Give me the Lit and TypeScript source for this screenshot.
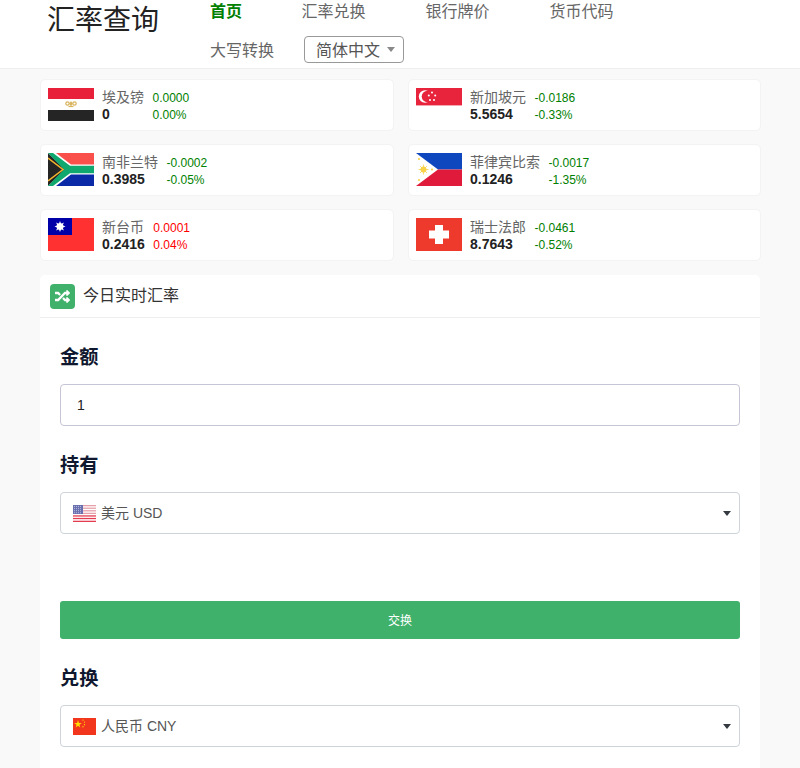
import { LitElement, html, css, svg } from "lit";
import { customElement } from "lit/decorators.js";

const flags: Record<string, unknown> = {
  eg: svg`<rect width="46" height="11" fill="#e8203a"/><rect y="11" width="46" height="11" fill="#fff"/><rect y="22" width="46" height="11" fill="#252525"/><g fill="none" stroke="#d8b35c" stroke-width="1.200"><circle cx="19.500" cy="15.500" r="1.700"/><circle cx="26.500" cy="15.500" r="1.700"/><path d="M23 13.500v5"/><path d="M20.500 18.500h5"/></g><circle cx="23" cy="15.500" r="1.600" fill="#d8b35c"/>`,
  sg: svg`<rect width="46" height="33" fill="#fff"/><rect width="46" height="17" fill="#e8233c"/><rect y="17" width="46" height="1" fill="#f4a7b1"/><circle cx="9" cy="8.500" r="6.200" fill="#fff"/><circle cx="11.500" cy="8.500" r="5.800" fill="#e8233c"/><g fill="#fff"><circle cx="16" cy="4.500" r="1"/><circle cx="12.800" cy="7.500" r="1"/><circle cx="19.200" cy="7.500" r="1"/><circle cx="14" cy="12" r="1"/><circle cx="18" cy="12" r="1"/></g>`,
  za: svg`<rect width="46" height="16.500" fill="#f9504c"/><rect y="16.500" width="46" height="16.500" fill="#0a2aa8"/><path d="M0 0l23 16.500L0 33z" fill="#252525"/><path d="M0 0h8l15 11.500h23v10H23L8 33H0l17-16.500z" fill="#fff"/><path d="M0 0h5l17 12.800h24v7.400H22L5 33H0l16-16.500z" fill="#0fa96f" stroke="none"/><path d="M0 5l15 11.500L0 28" fill="#252525" stroke="#f6b52e" stroke-width="1.500"/>`,
  tw: svg`<rect width="46" height="33" fill="#ff3131"/><rect width="24" height="17" fill="#0000a8"/><g fill="#fff"><circle cx="12" cy="8.500" r="3.300"/><path d="M12 3l1.200 3h-2.400zM12 14l-1.200-3h2.400zM6.500 8.500l3-1.200v2.400zM17.500 8.500l-3 1.200V7.300zM8.100 4.600l3 1.300-1.700 1.700zM15.900 12.400l-3-1.300 1.700-1.700zM15.900 4.600l-1.300 3-1.700-1.700zM8.100 12.400l1.300-3 1.700 1.700z"/></g>`,
  ph: svg`<rect width="46" height="16.500" fill="#0f47bf"/><rect y="16.500" width="46" height="16.500" fill="#e01a3a"/><path d="M0 0l22 16.500L0 33z" fill="#fff"/><g fill="#f8d34a"><circle cx="7.500" cy="16.500" r="3"/><path d="M7.500 11.500v10M2.500 16.500h10M4 13l7 7M11 13l-7 7" stroke="#f8d34a" stroke-width=".8"/><circle cx="3" cy="6" r="1.100"/><circle cx="3" cy="27" r="1.100"/><circle cx="16" cy="16.500" r="1.100"/></g>`,
  ch: svg`<rect width="46" height="33" fill="#ee3a2c"/><path d="M19 7h8v5.500h6v8h-6V26h-8v-5.500h-6v-8h6z" fill="#fff"/>`,
  us: svg`<rect width="46" height="33" fill="#fff"/><g fill="#e5a0aa"><rect width="46" height="2.500"/><rect y="5" width="46" height="2.500"/><rect y="10" width="46" height="2.500"/><rect y="15" width="46" height="2.500"/></g><g fill="#e33b50"><rect y="20" width="46" height="2.500"/><rect y="25" width="46" height="2.500"/><rect y="30.500" width="46" height="2.500"/></g><rect width="20" height="17.500" fill="#6a6fb0"/><path d="M2 3h16M2 7h16M2 11h16M2 15h16" stroke="#d8daf0" stroke-width="1.400" stroke-dasharray="2 2"/>`,
  cn: svg`<rect width="46" height="33" fill="#f1361d"/><path d="M10 4l1.800 5.500h5.700l-4.600 3.400 1.800 5.500-4.700-3.400-4.700 3.400 1.800-5.500-4.600-3.400h5.700z" fill="#ffde00"/><g fill="#ffde00"><circle cx="20" cy="4" r="1.300"/><circle cx="23" cy="8" r="1.300"/><circle cx="23" cy="13" r="1.300"/><circle cx="20" cy="17" r="1.300"/></g>`,
};

const rates = [
  { flag: "eg", name: "埃及镑", value: "0", change: "0.0000", pct: "0.00%", up: false },
  { flag: "sg", name: "新加坡元", value: "5.5654", change: "-0.0186", pct: "-0.33%", up: false },
  { flag: "za", name: "南非兰特", value: "0.3985", change: "-0.0002", pct: "-0.05%", up: false },
  { flag: "ph", name: "菲律宾比索", value: "0.1246", change: "-0.0017", pct: "-1.35%", up: false },
  { flag: "tw", name: "新台币", value: "0.2416", change: "0.0001", pct: "0.04%", up: true },
  { flag: "ch", name: "瑞士法郎", value: "8.7643", change: "-0.0461", pct: "-0.52%", up: false },
];

const navItems = ["汇率兑换", "银行牌价", "货币代码", "大写转换"];

@customElement("app-root")
export class AppRoot extends LitElement {
  static styles = css`
    :host {
      display: block;
      height: 768px;
      overflow: hidden;
      background: #f9f9f9;
      font-family: "Liberation Sans", "Noto Sans CJK SC", sans-serif;
      color: #212529;
    }
    * { box-sizing: border-box; }
    .header {
      display: flex;
      height: 69px;
      padding-left: 47px;
      background: #fff;
      border-bottom: 1px solid #eeeeee;
    }
    .logo {
      width: 133px;
      margin: 0;
      padding-top: 3px;
      font-size: 28px;
      line-height: 36px;
      font-weight: 400;
      color: #222;
    }
    .nav {
      width: 520px;
      display: flex;
      flex-wrap: wrap;
      align-content: flex-start;
      align-items: flex-start;
    }
    .nav a {
      height: 36px;
      padding: 0 30px;
      font-size: 16px;
      line-height: 24px;
      color: #666;
    }
    .nav .second { line-height: 28px; padding-top: 1px; height: 32px; }
    .nav a.active { color: #008000; font-weight: 700; padding-right: 29.5px; }
    .lang {
      display: flex;
      align-items: center;
      width: 100px;
      height: 27px;
      padding: 0 0 1px 11px;
      border: 1px solid #999;
      border-radius: 4px;
      font-size: 16px;
      color: #555;
    }
    .lang i {
      margin-left: 7px;
      border: 4px solid transparent;
      border-top: 5px solid #888;
      border-bottom: 0;
    }
    .grid {
      display: grid;
      grid-template-columns: 354px 353px;
      gap: 13px 14px;
      padding: 10px 40px 14px;
    }
    .card {
      display: flex;
      height: 52px;
      padding: 8px 7px;
      gap: 8px;
      background: #fff;
      border: 1px solid #f3f3f3;
      border-radius: 5px;
    }
    .flag { width: 46px; height: 33px; flex: none; display: block; }
    .name { font-size: 14px; line-height: 17px; color: #666; margin-top: 1px; white-space: nowrap; width: max-content; }
    .value { font-size: 14px; line-height: 17px; font-weight: 700; color: #222; }
    .delta { margin-left: 0.5px; font-size: 12px; line-height: 17px; padding-top: 2px; color: #008000; }
    .delta.up { color: #ff0000; }
    .main {
      width: 720px;
      margin-left: 40px;
      background: #fff;
      border-radius: 5px 5px 0 0;
    }
    .main-head {
      display: flex;
      align-items: center;
      gap: 8px;
      height: 43px;
      padding-left: 10px;
      border-bottom: 1px solid #eeeeee;
      font-size: 16px;
      color: #333;
    }
    .main-head .title { padding-bottom: 4px; }
    .icon {
      display: flex;
      align-items: center;
      justify-content: center;
      width: 25px;
      height: 25px;
      border-radius: 4px;
      background: #3fb16b;
    }
    .icon svg { width: 15px; height: 15px; fill: #fff; display: block; }
    .body { padding: 25px 20px 0; }
    .label {
      margin: 0 0 12px;
      font-size: 19.200px;
      line-height: 29px;
      font-weight: 700;
      color: #10182f;
    }
    .input {
      display: block;
      width: 100%;
      height: 42px;
      padding: 0 16px;
      margin-bottom: 25px;
      border: 1px solid #c5c5d5;
      border-radius: 4px;
      outline: none;
      font: 14px "Liberation Sans", sans-serif;
      color: #222;
    }
    .select {
      display: flex;
      align-items: center;
      gap: 5px;
      height: 42px;
      padding: 0 8px 0 12px;
      border: 1px solid #ced4da;
      border-radius: 4px;
      font-size: 14px;
      color: #555;
    }
    .select svg { width: 23px; height: 17px; }
    .select span { flex: 1; padding-bottom: 3px; }
    .select i {
      border: 4px solid transparent;
      border-top: 5px solid #343a40;
      border-bottom: 0;
    }
    .button {
      display: block;
      width: 100%;
      height: 38px;
      margin: 67px 0 25px;
      padding: 0 0 2px;
      border: 0;
      border-radius: 3px;
      background: #3fb16b;
      color: #fff;
      font: 12px "Liberation Sans", "Noto Sans CJK SC", sans-serif;
    }
    .select.last { margin-bottom: 24px; }
  `;

  private flag(code: string) {
    return html`<svg class="flag" viewBox="0 0 46 33" preserveAspectRatio="none">${flags[code]}</svg>`;
  }

  render() {
    return html`
      <header class="header">
        <h1 class="logo">汇率查询</h1>
        <nav class="nav">
          <a class="active">首页</a>
          ${navItems.map((n, i) => html`<a class=${i === 3 ? "second" : ""}>${n}</a>`)}
          <div class="lang">简体中文<i></i></div>
        </nav>
      </header>
      <section class="grid">
        ${rates.map(
          (r) => html`<div class="card">
            ${this.flag(r.flag)}
            <div>
              <div class="name">${r.name}</div>
              <div class="value">${r.value}</div>
            </div>
            <div class="delta ${r.up ? "up" : ""}">
              <div>${r.change}</div>
              <div>${r.pct}</div>
            </div>
          </div>`
        )}
      </section>
      <section class="main">
        <div class="main-head">
          <span class="icon">
            <svg viewBox="0 0 512 512"><path d="M504.971 359.029c9.373 9.373 9.373 24.569 0 33.941l-80 79.984c-15.010 15.010-40.971 4.490-40.971-16.971V416h-58.785a12.004 12.004 0 0 1-8.773-3.812l-70.556-75.596 53.333-57.143L352 336h32v-39.981c0-21.438 25.943-31.998 40.971-16.971l80 79.981zM12 176h84l52.781 56.551 53.333-57.143-70.556-75.596A11.999 11.999 0 0 0 122.785 96H12c-6.627 0-12 5.373-12 12v56c0 6.627 5.373 12 12 12zm372 0v39.984c0 21.460 25.961 31.980 40.971 16.971l80-79.984c9.373-9.373 9.373-24.569 0-33.941l-80-79.981C409.943 24.021 384 34.582 384 56.019V96h-58.785a12.004 12.004 0 0 0-8.773 3.812L96 336H12c-6.627 0-12 5.373-12 12v56c0 6.627 5.373 12 12 12h110.785c3.326 0 6.503-1.381 8.773-3.812L352 176h32z"/></svg>
          </span>
          <span class="title">今日实时汇率</span>
        </div>
        <div class="body">
          <h3 class="label">金额</h3>
          <input class="input" value="1" />
          <h3 class="label">持有</h3>
          <div class="select">${this.flag("us")}<span>美元 USD</span><i></i></div>
          <button class="button">交换</button>
          <h3 class="label">兑换</h3>
          <div class="select last">${this.flag("cn")}<span>人民币 CNY</span><i></i></div>
          <h3 class="label">金额</h3>
        </div>
      </section>
    `;
  }
}
